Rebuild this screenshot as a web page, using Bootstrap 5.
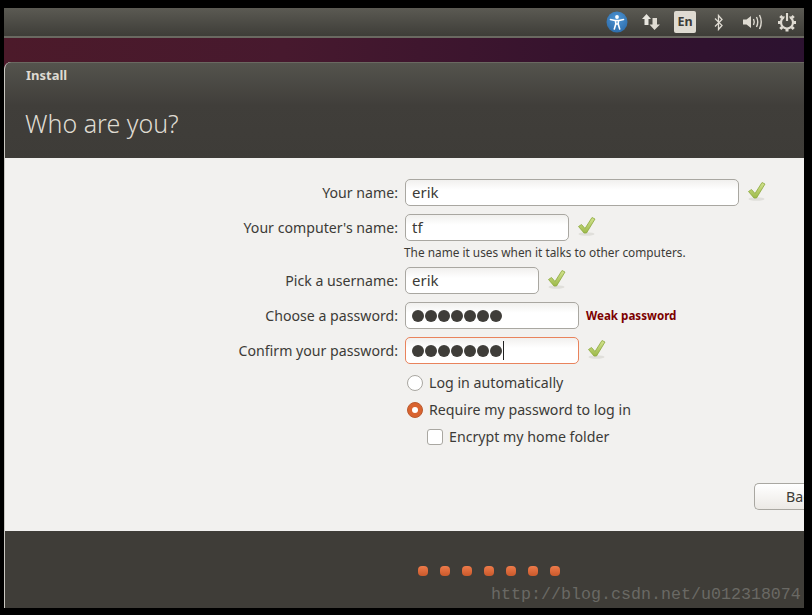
<!DOCTYPE html>
<html lang="en">
<head>
<meta charset="utf-8">
<title>Install</title>
<link href="https://cdn.jsdelivr.net/npm/bootstrap@5.3.0/dist/css/bootstrap.min.css" rel="stylesheet">
<style>
html,body{height:100%;background:#000;overflow:hidden}
body{padding:8px 8px 7px 4px;font-family:"Noto Sans","Open Sans",sans-serif;font-size:14px;color:#3c3b37;position:relative}
.desk{width:800px;height:600px}
.topbar{height:28px;background:linear-gradient(#5b5a53,#3e3d38);flex:none}
.tray-cell{width:34px;height:28px}
.lang{width:22px;height:22px;background:#dfdbd2;color:#3c3b37;border-radius:2px;font-weight:700;font-size:12.5px;line-height:22px;text-align:center}
.wall{height:26px;border-top:2px solid #6a6961;background:linear-gradient(90deg,#4c1a2a,#47192e 35%,#34122e 75%,#2c1230);flex:none}
.winbox{flex:1;min-height:0;border-left:1px solid #c9c7c1;border-top-left-radius:7px;overflow:hidden;background:#f2f1ef}
.wallstrip{background:#4c1a2a;min-height:0}
.hdr{height:96px;flex:none;background:linear-gradient(#54534d,#403e3a 45%,#3e3c38);border-top:1px solid #6a6961;padding:3px 0 0 20px}
.ttl{color:#dfdbd2;font-weight:700;font-size:13px;line-height:18px;margin-left:1px}
.who{color:#dfdbd2;font-size:25px;line-height:32px;margin-top:23px;font-weight:300}
.bodybox{height:373px;flex:none;padding-top:21px}
.frow{display:flex;align-items:center;height:27px;margin-bottom:8px}
.frow.tail{margin-bottom:5px}
.lbl{width:400px;text-align:right;padding-right:7px;flex:none;white-space:nowrap;font-size:14.15px}
.form-control.fld{height:27px;padding:0 6px;border:1px solid #a9a7a1;border-radius:5px;background:linear-gradient(#f1f0ee,#fff 40%);color:#3c3b37;font-size:15px;line-height:25px;display:flex;align-items:center}
.w334{width:334px}.w164{width:164px}.w134{width:134px}.w174{width:174px}
.form-control.foc{border-color:#e9835c;box-shadow:none}
.okk{margin:-3px 0 0 8px;flex:none}
.hint{margin:-5px 0 6px 399px;font-size:11.85px;line-height:17px;height:17px;white-space:nowrap}
.pip{width:12px;height:12px;border-radius:50%;background:#3f3d39;flex:none}
.dots{display:flex;width:90px;justify-content:space-between}
.caret{width:1px;height:19px;background:#222;margin-left:1px}
.weak{color:#7c0000;font-weight:700;font-size:11.6px;margin-left:7px;white-space:nowrap}
.opt{display:flex;align-items:center;margin-left:402px;height:27px;font-size:14.2px;white-space:nowrap}
.opt.sub{margin-left:422px}
.rad{width:16px;height:16px;border-radius:50%;border:1px solid #a9a7a1;background:#fff;margin-right:6px;flex:none}
.rad.on{border-color:#bb5a2e;background:#d9632f;display:flex;align-items:center;justify-content:center}
.rad.on::after{content:"";width:6px;height:6px;border-radius:50%;background:#fff}
.chk{width:16px;height:16px;border-radius:3px;border:1px solid #a9a7a1;background:#fff;margin-right:6px;flex:none}
.actions{display:flex;justify-content:flex-end;margin-top:33px;overflow:hidden}
.btn.back{width:50px;height:27px;padding:0 0 0 31px;font-size:14.2px;line-height:25px;text-align:left;color:#3c3b37;border:1px solid #a9a7a1;border-right:0;border-radius:5px 0 0 5px;background:linear-gradient(#fff,#ece9e5);overflow:hidden;white-space:nowrap}
.foot{flex:1;background:#3f3d38;padding-top:35px;padding-left:413px}
.slide{width:10px;height:10px;border-radius:4px;background:linear-gradient(#ee7b4a,#c9592b);margin-right:12px}
.mark-url{position:absolute;left:491px;top:584px;font-family:"Liberation Mono",monospace;font-size:16.67px;line-height:22px;color:#6a6964;white-space:nowrap}
</style>
</head>
<body>
<svg width="0" height="0" class="position-absolute">
<defs>
<linearGradient id="gg" x1="0" y1="0" x2="0" y2="1"><stop offset="0" stop-color="#d3e38f"/><stop offset="1" stop-color="#9dba4a"/></linearGradient>
<symbol id="okm" viewBox="0 0 20 20">
<ellipse cx="9.500" cy="18" rx="8" ry="1.800" fill="#e0dfdb"/>
<path d="M1.500 10.500 L4.500 8.500 L8 12.500 L15 1.500 L18 3 L9.500 17 L7 17 Z" fill="url(#gg)" stroke="#8ca83c" stroke-width=".8" stroke-linejoin="round"/>
</symbol>
</defs>
</svg>
<div class="desk d-flex flex-column">
  <div class="topbar d-flex align-items-center justify-content-end">
    <div class="tray-cell d-flex align-items-center justify-content-center">
      <svg width="22" height="22" viewBox="0 0 22 22"><defs><radialGradient id="bl" cx=".5" cy=".35" r=".7"><stop offset="0" stop-color="#4f97d6"/><stop offset="1" stop-color="#2c6aa8"/></radialGradient></defs><circle cx="11" cy="11" r="10.500" fill="url(#bl)"/><circle cx="11" cy="6" r="1.900" fill="#fff"/><path d="M4.500 8.500 L9 9.500 L13 9.500 L17.500 8.500 M9.500 9.500 L9.800 13 L8.300 18 M12.500 9.500 L12.200 13 L13.700 18 M9.800 13 H12.200" fill="none" stroke="#fff" stroke-width="1.600" stroke-linecap="round"/></svg>
    </div>
    <div class="tray-cell d-flex align-items-center justify-content-center">
      <svg width="18" height="18" viewBox="0 0 18 18"><path d="M4.500 1 L9 6 H6.500 V12 H2.500 V6 H0 Z" fill="#e8e6df"/><path d="M12.500 17 L18 11.500 H15 V5 H10.500 V11.500 H7.500 Z" fill="#dfdbd2"/></svg>
    </div>
    <div class="tray-cell d-flex align-items-center justify-content-center"><div class="lang">En</div></div>
    <div class="tray-cell d-flex align-items-center justify-content-center">
      <svg width="12" height="17" viewBox="0 0 12 17"><path d="M2 4.500 L9 11.500 L5.500 15.500 V1.500 L9 5.500 L2 12.500" fill="none" stroke="#dfdbd2" stroke-width="1.300"/></svg>
    </div>
    <div class="tray-cell d-flex align-items-center justify-content-center">
      <svg width="21" height="16" viewBox="0 0 21 16"><path d="M0 5.500 H3.500 L8 2 V14 L3.500 10.500 H0 Z" fill="#dfdbd2"/><path d="M10.500 5 Q12 8 10.500 11 M13.500 3 Q16 8 13.500 13 M16.500 1 Q20 8 16.500 15" fill="none" stroke="#dfdbd2" stroke-width="1.400"/></svg>
    </div>
    <div class="tray-cell d-flex align-items-center justify-content-center">
      <svg width="20" height="20" viewBox="0 0 20 20"><circle cx="10" cy="10.500" r="6" fill="none" stroke="#dfdbd2" stroke-width="2.200"/><path d="M10 9 V0" stroke="#47463f" stroke-width="5"/><path d="M10 9 V1" stroke="#dfdbd2" stroke-width="2.200"/><g stroke="#dfdbd2" stroke-width="3"><path d="M1 10.500 H3.500 M16.500 10.500 H19 M3.300 4 L5.300 6 M14.700 6 L16.700 4 M3.300 17 L5.300 15 M14.700 15 L16.700 17 M10 17 V19.500"/></g></svg>
    </div>
  </div>
  <div class="wall"></div>
  <div class="wallstrip flex-grow-1 d-flex flex-column">
    <div class="winbox d-flex flex-column">
      <div class="hdr">
        <div class="ttl">Install</div>
        <div class="who">Who are you?</div>
      </div>
      <div class="bodybox">
        <div class="frow"><div class="lbl">Your name:</div><div class="form-control fld w334">erik</div><svg class="okk" width="20" height="20"><use href="#okm"/></svg></div>
        <div class="frow"><div class="lbl">Your computer's name:</div><div class="form-control fld w164">tf</div><svg class="okk" width="20" height="20"><use href="#okm"/></svg></div>
        <div class="hint">The name it uses when it talks to other computers.</div>
        <div class="frow"><div class="lbl">Pick a username:</div><div class="form-control fld w134">erik</div><svg class="okk" width="20" height="20"><use href="#okm"/></svg></div>
        <div class="frow"><div class="lbl">Choose a password:</div><div class="form-control fld w174"><div class="dots"><i class="pip"></i><i class="pip"></i><i class="pip"></i><i class="pip"></i><i class="pip"></i><i class="pip"></i><i class="pip"></i></div></div><span class="weak">Weak password</span></div>
        <div class="frow tail"><div class="lbl">Confirm your password:</div><div class="form-control fld w174 foc"><div class="dots"><i class="pip"></i><i class="pip"></i><i class="pip"></i><i class="pip"></i><i class="pip"></i><i class="pip"></i><i class="pip"></i></div><i class="caret"></i></div><svg class="okk" width="20" height="20"><use href="#okm"/></svg></div>
        <div class="opt"><i class="rad"></i>Log in automatically</div>
        <div class="opt"><i class="rad on"></i>Require my password to log in</div>
        <div class="opt sub"><i class="chk"></i>Encrypt my home folder</div>
        <div class="actions"><button type="button" class="btn back">Back</button></div>
      </div>
      <div class="foot d-flex align-items-start">
        <i class="slide"></i><i class="slide"></i><i class="slide"></i><i class="slide"></i><i class="slide"></i><i class="slide"></i><i class="slide"></i>
      </div>
    </div>
  </div>
</div>
<div class="mark-url">http://blog.csdn.net/u012318074</div>
</body>
</html>
